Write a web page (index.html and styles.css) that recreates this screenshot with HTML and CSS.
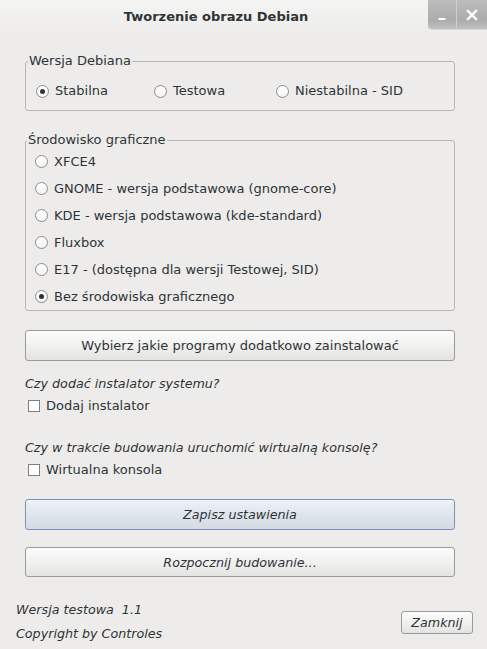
FILE: index.html
```html
<!DOCTYPE html>
<html lang="pl">
<head>
<meta charset="utf-8">
<title>Tworzenie obrazu Debian</title>
<link rel="stylesheet" href="styles.css">
</head>
<body>
<div class="window">
  <div class="titlebar">
    <div class="title">Tworzenie obrazu Debian</div>
    <div class="wm-buttons">
      <div class="wm-btn wm-min"><svg width="10" height="12" viewBox="0 0 10 12"><rect x="1.5" y="9" width="7" height="2" fill="#fff"/></svg></div>
      <div class="wm-btn wm-close"><svg width="12" height="12" viewBox="0 0 12 12"><path d="M2 2 L10 10 M10 2 L2 10" stroke="#fff" stroke-width="2.4" stroke-linecap="square"/></svg></div>
    </div>
  </div>
  <div class="content">
    <fieldset class="group group-version">
      <legend>Wersja Debiana</legend>
      <div class="radio-row">
        <label class="opt opt-w1"><span class="radio checked"></span>Stabilna</label>
        <label class="opt opt-w2"><span class="radio"></span>Testowa</label>
        <label class="opt"><span class="radio"></span>Niestabilna - SID</label>
      </div>
    </fieldset>
    <fieldset class="group group-desktop">
      <legend>Środowisko graficzne</legend>
      <label class="opt item"><span class="radio"></span>XFCE4</label>
      <label class="opt item"><span class="radio"></span>GNOME - wersja podstawowa (gnome-core)</label>
      <label class="opt item"><span class="radio"></span>KDE - wersja podstawowa (kde-standard)</label>
      <label class="opt item"><span class="radio"></span>Fluxbox</label>
      <label class="opt item"><span class="radio"></span>E17 - (dostępna dla wersji Testowej, SID)</label>
      <label class="opt item"><span class="radio checked"></span>Bez środowiska graficznego</label>
    </fieldset>
    <button class="btn btn-wide btn-programs">Wybierz jakie programy dodatkowo zainstalować</button>
    <div class="question q1">Czy dodać instalator systemu?</div>
    <label class="opt check-row"><span class="checkbox"></span>Dodaj instalator</label>
    <div class="question q2">Czy w trakcie budowania uruchomić wirtualną konsolę?</div>
    <label class="opt check-row"><span class="checkbox"></span>Wirtualna konsola</label>
    <button class="btn btn-wide btn-italic btn-save">Zapisz ustawienia</button>
    <button class="btn btn-wide btn-italic btn-build">Rozpocznij budowanie...</button>
  </div>
  <div class="footer">
    <div class="info">
      <div class="info-line">Wersja testowa&nbsp; 1.1</div>
      <div class="info-line">Copyright by Controles</div>
    </div>
    <button class="btn btn-italic btn-close">Zamknij</button>
  </div>
</div>
</body>
</html>
```
FILE: styles.css
```css
html, body {
  margin: 0;
  padding: 0;
}
body {
  width: 487px;
  height: 649px;
  overflow: hidden;
  background: #edeceb;
  font-family: "DejaVu Sans", "Noto Sans", sans-serif;
  font-size: 13px;
  color: #2e3436;
}
.window {
  display: flex;
  flex-direction: column;
  height: 649px;
  background: #edeceb;
}
.titlebar {
  display: flex;
  height: 36px;
  background: linear-gradient(#f4f4f3, #edeceb);
}
.title {
  flex: 1;
  text-align: center;
  font-weight: bold;
  font-size: 13px;
  line-height: 34px;
  padding-left: 4px;
  color: #2e3436;
}
.wm-buttons {
  display: flex;
  align-self: flex-start;
  height: 29px;
  border-bottom-left-radius: 4px;
  overflow: hidden;
  background: linear-gradient(#bdbdbd, #acacac 70%, #c2c2c2);
  box-shadow: 0 1px 0 #d6d6d6;
}
.wm-btn {
  width: 29px;
  height: 29px;
  display: flex;
  align-items: center;
  justify-content: center;
}
.wm-min {
  width: 28px;
  border-right: 1px solid #cfcfcf;
}
.wm-close {
  width: 30px;
}
.content {
  display: flex;
  flex-direction: column;
  padding: 17px 32px 0 25px;
}
.group {
  margin: 0;
  padding: 0 8px 0 10px;
  border: 1px solid #b8b7b5;
  border-radius: 3px;
}
.group legend {
  padding: 0 1px;
  margin-left: -8px;
  line-height: 16px;
  font-size: 13px;
}
.group-version {
  padding-top: 12px;
  padding-bottom: 9px;
}
.radio-row {
  display: flex;
  height: 20px;
  align-items: center;
}
.opt {
  display: flex;
  align-items: center;
  line-height: 16px;
}
.opt-w1 {
  width: 118px;
}
.opt-w2 {
  width: 122px;
}
.radio {
  width: 11px;
  height: 11px;
  border: 1px solid #8d8d8b;
  border-radius: 50%;
  background: linear-gradient(#ffffff, #f3f3f3);
  margin-right: 6px;
  box-sizing: content-box;
  position: relative;
  flex: none;
}
.radio.checked::after {
  content: "";
  position: absolute;
  left: 3px;
  top: 3px;
  width: 5px;
  height: 5px;
  border-radius: 50%;
  background: #2e3436;
}
.group-desktop {
  margin-top: 21px;
  padding-left: 9px;
}
.item {
  height: 27px;
}
.btn {
  font-family: "DejaVu Sans", "Noto Sans", sans-serif;
  font-size: 13px;
  color: #2e3436;
  background: linear-gradient(#fcfcfc, #f1f1f0 50%, #e3e3e2);
  border: 1px solid #9b9b9a;
  border-radius: 3px;
  padding: 0;
  margin: 0;
}
.btn-wide {
  height: 31px;
  width: 100%;
}
.btn-programs {
  margin-top: 19px;
}
.btn-italic {
  font-style: italic;
  font-size: 12.7px;
}
.question {
  font-style: italic;
  font-size: 12.7px;
  line-height: 18px;
}
.q1 {
  margin-top: 14px;
}
.q2 {
  margin-top: 23px;
}
.check-row {
  height: 20px;
  margin-top: 3px;
  padding-left: 3px;
}
.checkbox {
  width: 10px;
  height: 10px;
  border: 1px solid #7f7f7d;
  background: #fff;
  margin-right: 6px;
  flex: none;
}
.btn-save {
  margin-top: 19px;
  border-color: #7894b8;
  background: linear-gradient(#eef2f7, #dfe5ec 50%, #d4dae2);
}
.btn-build {
  margin-top: 17px;
  height: 30px;
}
.footer {
  display: flex;
  align-items: center;
  justify-content: space-between;
  padding: 21px 14px 0 16px;
}
.info-line {
  font-style: italic;
  font-size: 12.7px;
  line-height: 24px;
}
.btn-close {
  width: 72px;
  height: 23px;
}
```
